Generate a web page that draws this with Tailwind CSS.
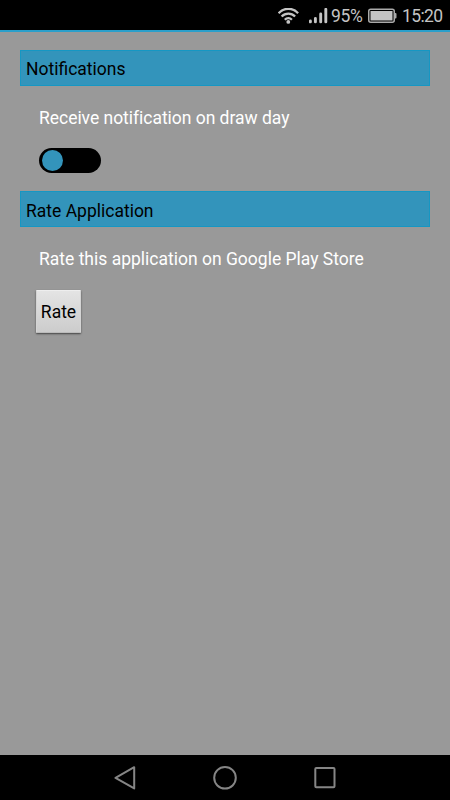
<!DOCTYPE html>
<html lang="en">
<head>
    <meta charset="UTF-8">
    <meta name="viewport" content="width=device-width, initial-scale=1.0">
    <title>Settings</title>
    <script src="https://cdn.jsdelivr.net/npm/@tailwindcss/browser@4"></script>
</head>
<body class="bg-[#999999] font-[Roboto,sans-serif]">
    <div class="w-full h-screen flex flex-col overflow-hidden text-[17.5px] leading-6">

        <!-- Status bar -->
        <header class="h-8 shrink-0 bg-black border-b-2 border-[#2a9fca] flex items-center justify-end pt-px pr-2 text-[#c4c4c4]">
            <svg class="w-[22px] h-4 mr-[9px]" viewBox="0 0 22 16" fill="none" stroke="currentColor" stroke-width="2.3">
                <path d="M.6 5.2C6-.7 14.7-.7 20.1 5.2M3.6 8.5c3.8-3.9 9.7-3.9 13.5 0M6.8 11.7c2-2 5.1-2 7.1 0"/>
                <circle cx="10.3" cy="13.9" r="1.9" fill="currentColor" stroke="none"/>
            </svg>
            <svg class="w-[19px] h-4 mr-[3px]" viewBox="0 0 19 16" fill="none" stroke="currentColor" stroke-width="2.9" stroke-linecap="round">
                <path d="M1.4 13v.9M6.4 10.5v3.4M11.7 6v7.9M16.8 1.3v12.6"/>
            </svg>
            <span class="w-8 text-[17.5px] tracking-[-0.3px] whitespace-nowrap">95%</span>
            <svg class="w-[29px] h-4 ml-[5px] mr-[5px]" viewBox="0 0 29 16">
                <rect x=".75" y="1.25" width="25.5" height="13" rx="2" fill="none" stroke="#aaa" stroke-width="1.5"/>
                <rect x="2.5" y="3" width="22" height="9.5" fill="#c4c4c4"/>
                <path d="M27 5h.5q1 0 1 1v3.5q0 1-1 1H27z" fill="#aaa"/>
            </svg>
            <span class="w-10 text-[17.5px] tracking-[-0.6px]">15:20</span>
        </header>

        <main class="flex-1 px-5 pt-[18px]">
            <section class="h-[141px]">
                <h2 class="h-9 bg-[#3394bb] border border-[#1697c3] flex items-center px-[5px] pt-0.5 text-black">Notifications</h2>
                <p class="mt-5 ml-[19px] text-white tracking-[-0.03px]">Receive notification on draw day</p>
                <button class="mt-[18px] ml-[19px] w-[62px] h-[25px] rounded-full bg-black flex items-center px-[3px]" aria-label="Receive notification">
                    <span class="w-[21px] h-[21px] rounded-full bg-[#3394bb]"></span>
                </button>
            </section>

            <section>
                <h2 class="h-9 bg-[#3394bb] border border-[#1697c3] flex items-center px-[5px] pt-[3px] text-black">Rate Application</h2>
                <p class="mt-5 ml-[19px] text-white">Rate this application on Google Play Store</p>
                <button class="mt-[19px] ml-4 w-[45px] h-[43px] rounded-[1px] bg-linear-to-b from-[#e4e4e4] to-[#cccccc] border border-t-[#eeeeee] border-x-[#d4d4d4] border-b-[#bbbbbb] shadow-[0_1px_2px_#444444] flex items-center justify-center text-black">Rate</button>
            </section>
        </main>

        <!-- Navigation bar -->
        <nav class="h-[45px] shrink-0 bg-black flex items-center justify-center gap-[76px] text-[#858585]">
            <svg class="w-6 h-6" viewBox="0 0 24 24" fill="none" stroke="currentColor" stroke-width="2" stroke-linejoin="round">
                <path d="M21.2 1.2v21.2L2.5 11.8z"/>
            </svg>
            <svg class="w-6 h-6" viewBox="0 0 24 24" fill="none" stroke="currentColor" stroke-width="2">
                <circle cx="12" cy="11.8" r="10.8"/>
            </svg>
            <svg class="w-6 h-6" viewBox="0 0 24 24" fill="none" stroke="currentColor" stroke-width="2">
                <rect x="2.3" y="2" width="19.2" height="19.2" rx="1"/>
            </svg>
        </nav>
    </div>
</body>
</html>
